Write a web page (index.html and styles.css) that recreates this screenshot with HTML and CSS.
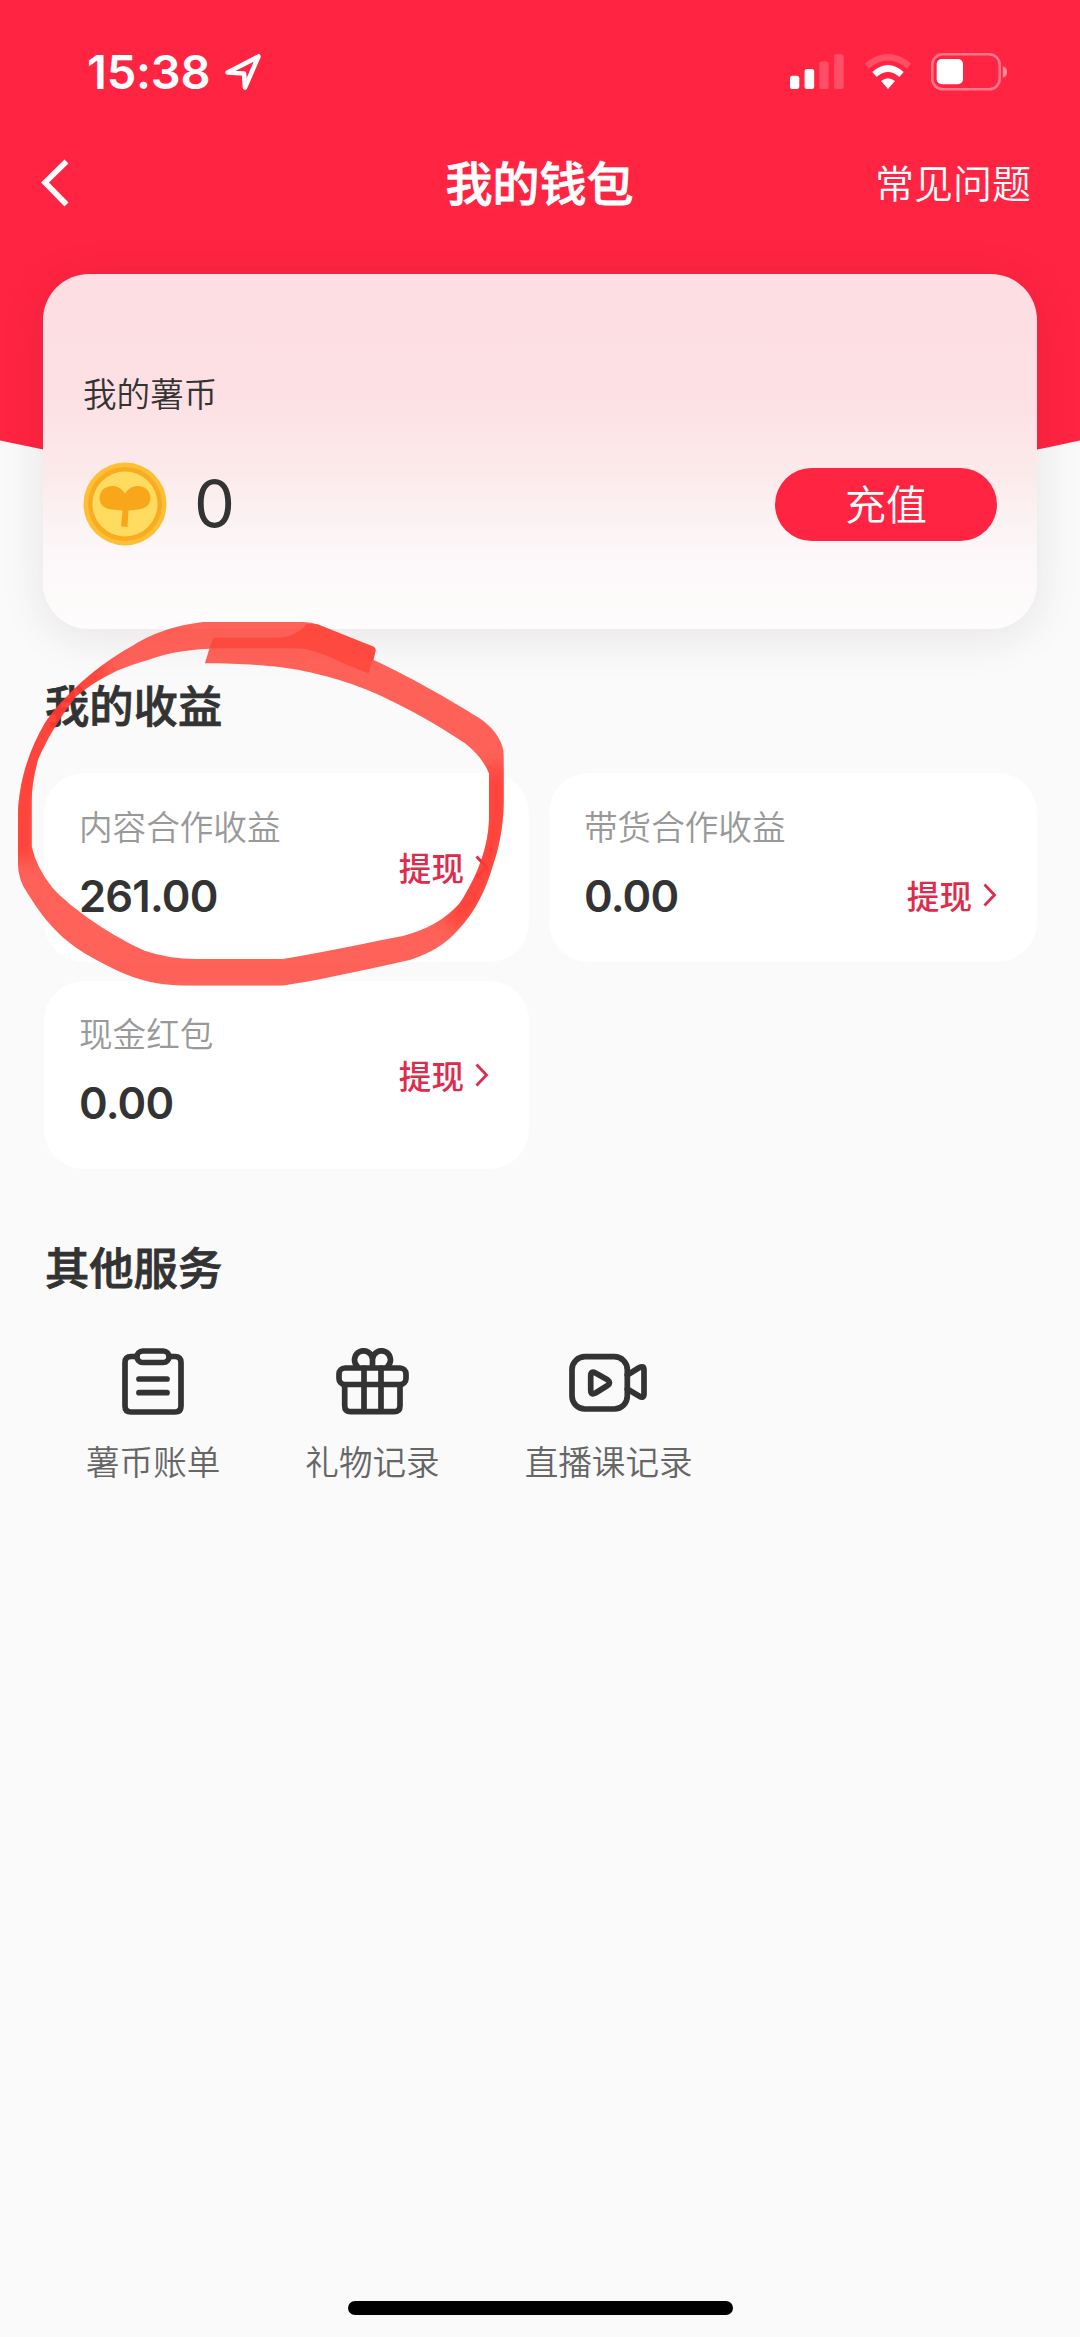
FILE: index.html
```html
<!DOCTYPE html>
<html lang="zh-CN">
<head>
<meta charset="utf-8">
<title>我的钱包</title>
<link rel="stylesheet" href="styles.css">
</head>
<body>
<div class="page">
  <svg class="backdrop" viewBox="0 0 1080 520" preserveAspectRatio="none">
    <path d="M0 0H1080V440.500Q540 560 0 440.500Z" fill="#ff2442"/>
  </svg>

  <header class="status">
    <div class="status-left">
      <span class="clock">15:38</span>
      <svg class="locate" width="38" height="38" viewBox="0 0 38 38" fill="none" stroke="#fff" stroke-width="4.600" stroke-linejoin="round"><path d="M3.500 19.500L34.500 3.500L21 34.500L20 20.500Z"/></svg>
    </div>
    <div class="status-right">
      <svg width="54" height="36" viewBox="0 0 54 36" fill="#fff">
        <rect x="0" y="21.700" width="9.300" height="13.300" rx="2.500"/>
        <rect x="14.600" y="15" width="9.600" height="20" rx="2.500"/>
        <rect x="29.300" y="7.600" width="9.300" height="27.400" rx="2.500" opacity=".2"/>
        <rect x="44.100" y="0.300" width="9.600" height="34.700" rx="2.500" opacity=".2"/>
      </svg>
      <svg class="wifi" width="48" height="36" viewBox="0 0 48 36" fill="none" stroke="#fff">
        <path d="M3 12Q24 -5.500 45 12" stroke-width="6.500" opacity=".2"/>
        <path d="M10.500 20.500Q24 8.500 37.500 20.500" stroke-width="6.500"/>
        <path d="M17 27Q24 21.500 31 27L24 35Z" fill="#fff" stroke="none"/>
      </svg>
      <svg class="battery" width="78" height="38" viewBox="0 0 78 38">
        <rect x="1.300" y="1.300" width="67.400" height="35" rx="10.500" fill="none" stroke="#fff" stroke-opacity=".38" stroke-width="2.600"/>
        <rect x="5.700" y="6" width="26.300" height="25.300" rx="5" fill="#fff"/>
        <path d="M71.800 13Q76 14.500 76 19T71.800 25Z" fill="#fff" fill-opacity=".45"/>
      </svg>
    </div>
  </header>

  <nav class="nav">
    <svg class="back" width="28" height="48" viewBox="0 0 28 48" fill="none" stroke="#fff" stroke-width="5.600"><path d="M25.500 2.500L4 23.500L25.500 45.500"/></svg>
    <h1 class="title">我的钱包</h1>
    <span class="faq">常见问题</span>
  </nav>

  <section class="wallet">
    <div class="wallet-label">我的薯币</div>
    <div class="wallet-row">
      <svg class="coin" width="84" height="84" viewBox="0 0 84 84">
        <circle cx="42" cy="42" r="41.500" fill="#fdc034"/>
        <circle cx="42" cy="42" r="37" fill="#faab20"/>
        <circle cx="42" cy="42" r="32.500" fill="#ffdc60"/>
        <path d="M42 32C48 20 67 22 67.500 36C67.500 44 61 47 55 47.500L45.500 48.500L44.500 65L38 64.500L39.500 48.500L29 47.500C22 47 16.500 43 16.500 36C17 22 36 20 42 32Z" fill="#faa61a"/>
      </svg>
      <span class="balance">0</span>
      <button class="recharge">充值</button>
    </div>
  </section>

  <h2 class="heading">我的收益</h2>
  <section class="grid">
    <article class="card">
      <div class="info"><div class="label">内容合作收益</div><div class="value">261.00</div></div>
      <div class="withdraw">提现<svg width="14" height="24" viewBox="0 0 14 24"><path d="M1.500 1.500L11.500 12L1.500 22.500"/></svg></div>
    </article>
    <article class="card card-low">
      <div class="info"><div class="label">带货合作收益</div><div class="value">0.00</div></div>
      <div class="withdraw">提现<svg width="14" height="24" viewBox="0 0 14 24"><path d="M1.500 1.500L11.500 12L1.500 22.500"/></svg></div>
    </article>
    <article class="card">
      <div class="info"><div class="label">现金红包</div><div class="value">0.00</div></div>
      <div class="withdraw">提现<svg width="14" height="24" viewBox="0 0 14 24"><path d="M1.500 1.500L11.500 12L1.500 22.500"/></svg></div>
    </article>
  </section>

  <h2 class="heading heading-services">其他服务</h2>
  <section class="services">
    <div class="service">
      <svg width="62" height="68" viewBox="0 0 62 68"><path d="M14 8.500H9Q3 8.500 3 14.500V58Q3 64 9 64H53Q59 64 59 58V14.500Q59 8.500 53 8.500H48"/><rect x="15" y="3" width="32" height="11.500" rx="5.700"/><path d="M17 31H45M17 44.700H45"/></svg>
      <span>薯币账单</span>
    </div>
    <div class="service">
      <svg width="73" height="68" viewBox="0 0 73 68"><rect x="3" y="20" width="67" height="16.500" rx="6"/><path d="M8.700 37V57.700Q8.700 63.700 14.700 63.700H58Q64 63.700 64 57.700V37M28 20V63.700M45 20V63.700"/><path d="M21.500 18.500A9 9 0 1 1 36.500 11V19M51.500 18.500A9 9 0 1 0 36.500 11"/></svg>
      <span>礼物记录</span>
    </div>
    <div class="service">
      <svg width="79" height="68" viewBox="0 0 79 68"><rect x="3" y="8.700" width="55.300" height="52.300" rx="13"/><path d="M58.300 27L70 19.800Q75 17 75 22V46Q75 51 70 48L58.300 41M21.700 28Q21.700 22.500 26.500 25L38.500 31.800Q42.500 34.800 38.500 37.500L26.500 45Q21.700 47.500 21.700 42Z"/></svg>
      <span>直播课记录</span>
    </div>
  </section>

  <div class="home-bar"></div>

  <svg class="marker" width="540" height="420" viewBox="0 0 1568 1260" preserveAspectRatio="none">
    <defs>
      <clipPath id="ring"><path clip-rule="evenodd" d="M590 66H880Q905 66 925 74L1085 140Q1093 145 1090 155L1085 180C1210 240 1340 320 1400 360Q1463 410 1463 470V600C1463 680 1445 760 1430 800C1410 870 1380 935 1330 990Q1280 1050 1190 1080C1080 1105 930 1140 820 1157H540C430 1155 370 1130 280 1080C190 1030 140 980 80 880Q52 840 52 790V640C56 540 85 450 130 370C180 290 290 190 380 140Q470 80 590 66ZM608 146C530 150 480 160 430 180C340 205 280 240 220 290C165 365 130 430 110 480Q92 550 92 600V740Q105 800 150 860C210 930 330 1010 420 1052Q490 1077 570 1077H820C950 1055 1070 1028 1170 1008Q1275 980 1335 910C1385 830 1420 740 1420 650V520Q1400 470 1350 430C1260 365 1100 275 1000 245C900 212 800 190 595 190Z"/></clipPath>
      <filter id="soft" x="-20%" y="-20%" width="140%" height="140%"><feGaussianBlur stdDeviation="24"/></filter>
    </defs>
    <g clip-path="url(#ring)">
      <rect width="1568" height="1260" fill="#ff3b30" opacity=".8"/>
      <g fill="none" stroke="#ff3b30" stroke-width="70" opacity=".85" filter="url(#soft)">
        <path d="M300 190Q180 270 110 440Q55 580 72 780"/>
        <path d="M1442 500V650Q1420 850 1310 970"/>
      </g>
    </g>
    <path d="M620 113H800Q860 113 890 72H920L1085 140Q1093 145 1090 155L1070 220C1010 200 960 165 890 148Q870 145 840 145H608Z" fill="#ff3b30" opacity=".6"/>
  </svg>
</div>
</body>
</html>
```

FILE: styles.css
```css
* { box-sizing: border-box; margin: 0; padding: 0; }
body {
  background: #fafafa;
  color: #333;
  font-family: "Noto Sans CJK SC", sans-serif;
}
svg { display: block; flex: none; }
.page {
  position: relative;
  isolation: isolate;
  display: flex;
  flex-direction: column;
  width: 1080px;
  height: 2337px;
  overflow: hidden;
}
.backdrop {
  position: absolute;
  z-index: -1;
  top: 0;
  left: 0;
  width: 1080px;
  height: 520px;
}

.status {
  display: flex;
  justify-content: space-between;
  align-items: center;
  height: 144px;
  padding: 0 71px 0 87px;
}
.status-left, .status-right { display: flex; align-items: center; }
.clock {
  color: #fff;
  font: 600 47px/60px Inter, sans-serif;
  letter-spacing: -0.2px;
}
.locate { margin-left: 14px; }
.wifi { margin-left: 20px; }
.battery { margin-left: 19px; }

.nav {
  display: grid;
  grid-template-columns: 1fr auto 1fr;
  align-items: center;
  height: 78px;
  padding: 0 49px 0 41px;
  color: #fff;
}
.title {
  padding: 0 0 5px 7px;
  font-size: 47px;
  line-height: 60px;
  font-weight: 500;
  -webkit-text-stroke: 0.8px currentColor;
}
.faq {
  justify-self: end;
  padding-bottom: 5px;
  font-size: 39px;
  line-height: 60px;
  font-weight: 350;
}

.wallet {
  width: 994px;
  height: 355px;
  margin: 52px 0 0 43px;
  padding: 94px 40px 0;
  border-radius: 46px;
  background: linear-gradient(#fcdee3 0%, #fde0e4 35%, #fceaeb 56%, #fcf7f8 78%, #fefcfc 100%);
  box-shadow: 0 6px 46px rgba(60, 30, 30, .1);
}
.wallet-label { font-size: 33.600px; line-height: 50px; font-weight: 350; }
.wallet-row { display: flex; align-items: center; height: 84px; margin-top: 44px; }
.balance { margin-left: 27px; font: 400 65px/84px Inter, sans-serif; }
.recharge {
  width: 222px;
  height: 73px;
  margin-left: auto;
  padding-bottom: 4px;
  border: 0;
  border-radius: 37px;
  background: #ff2442;
  color: #fff;
  font: 350 41px/66px "Noto Sans CJK SC", sans-serif;
}

.heading {
  margin: 45px 0 0 45px;
  font-size: 44.300px;
  line-height: 60px;
  font-weight: 500;
  -webkit-text-stroke: 0.8px currentColor;
}
.grid {
  display: grid;
  grid-template-columns: 485px 488px;
  grid-auto-rows: 188.500px;
  gap: 19px 20px;
  padding: 39px 43px 0 44px;
}
.card {
  display: flex;
  justify-content: space-between;
  align-items: center;
  padding: 0 40px 0 35px;
  border-radius: 40px;
  background: #fff;
}
.info { padding-bottom: 11px; }
.label { color: #999; font-size: 33.600px; line-height: 50px; font-weight: 350; }
.value {
  margin-top: 18px;
  font: 600 43.500px/54px Inter, sans-serif;
  letter-spacing: -0.8px;
}
.withdraw {
  display: flex;
  align-items: center;
  gap: 11px;
  color: #e02a4c;
  font-size: 32.600px;
  line-height: 50px;
  font-weight: 500;
}
.withdraw path { fill: none; stroke: currentColor; stroke-width: 2.800; }
.card-low .withdraw { margin-top: 56px; }

.heading-services { margin-top: 67px; }
.services { display: flex; gap: 85px; padding: 52px 0 0 86px; }
.service {
  display: flex;
  flex-direction: column;
  align-items: center;
  gap: 20px;
  color: #666;
  font-size: 33.600px;
  line-height: 50px;
  font-weight: 350;
}
.service svg {
  fill: none;
  stroke: #333;
  stroke-width: 5.700;
  stroke-linecap: round;
  stroke-linejoin: round;
}

.home-bar {
  width: 385px;
  height: 14px;
  margin: auto auto 22px 348px;
  border-radius: 7px;
  background: #000;
}
.marker { position: absolute; top: 600px; left: 0; }
```
